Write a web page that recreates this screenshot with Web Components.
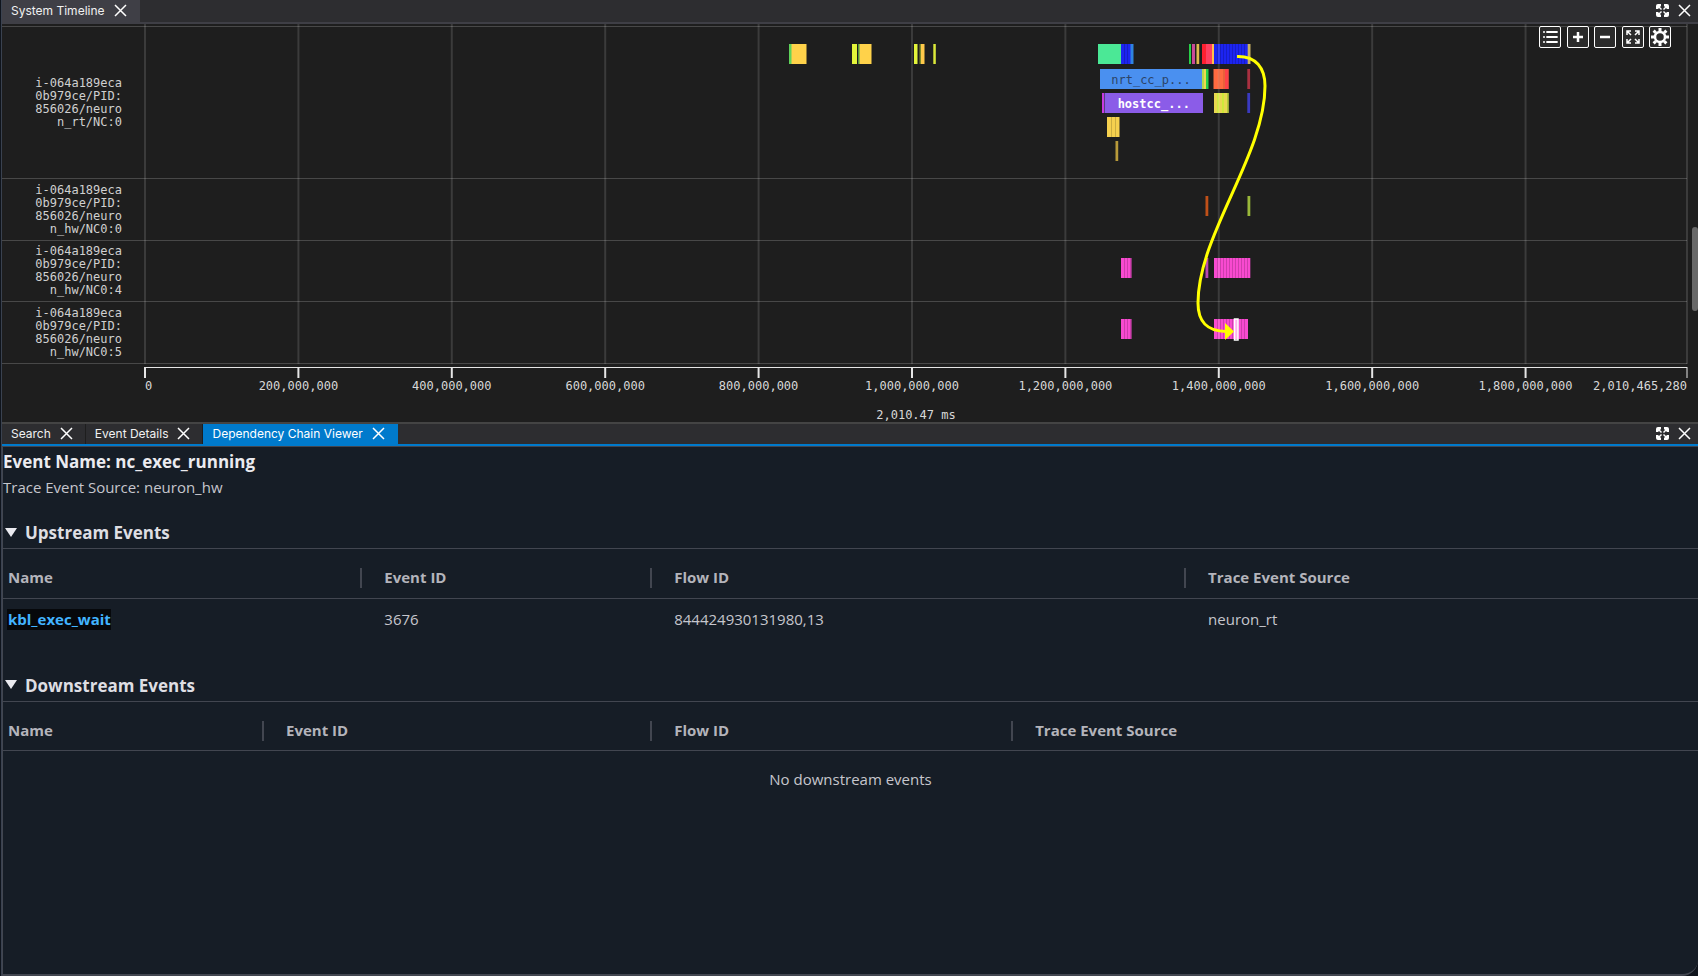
<!DOCTYPE html>
<html lang="en">
<head>
<meta charset="utf-8">
<title>System Timeline</title>
<style>
  html, body {
    height: 100%;
    margin: 0;
    background: #0f141c;
  }
</style>
</head>
<body>
<trace-app></trace-app>

<script>
// ---------- shared icons ----------
const ICON_CLOSE = `<svg width="13" height="14" viewBox="0 0 13 14"><path d="M1 1l11 11M12 1L1 12" stroke="#fff" stroke-width="1.5" fill="none"/></svg>`;
const ICON_MAX = `<svg width="13" height="14" viewBox="0 0 13 14"><path fill="#fff" d="M0 5V2Q0 0 2 0h3v2L4 3l2 2-1 1-2-2-1 1zM8 0h3q2 0 2 2v3h-2l-1-1-2 2-1-1 2-2-1-1zM0 8h2l1 1 2-2 1 1-2 2 1 1v2H2q-2 0-2-2zM13 8v3q0 2-2 2H8v-2l1-1-2-2 1-1 2 2 1-1z"/></svg>`;

// ---------- dock-tab ----------
const template_dockTab = document.createElement("template");
template_dockTab.innerHTML = `
<style>
  :host {
    display: flex;
    align-items: center;
    gap: 9px;
    padding: 0 12px 0 9px;
    background: #2d2d30;
    border-right: 1px solid #1e1e1e;
    color: #f1f1f1;
  }
  :host([open]) { background: #3f3f46; border-color: #3f3f46; }
  :host([active]) { background: #007acc; border-color: #007acc; color: #fff; }
  button { all: unset; display: block; cursor: pointer; }
  svg { display: block; }
  .name { cursor: default; white-space: nowrap; }
</style>
<button class="name" role="tab"><slot></slot></button>
<button aria-label="Close tab">${ICON_CLOSE}</button>
`;

class DockTab extends HTMLElement {
  constructor() {
    super();
    this.attachShadow({ mode: "open" });
    this.shadowRoot.appendChild(template_dockTab.content.cloneNode(true));
  }
}
customElements.define("dock-tab", DockTab);

// ---------- dock-bar: the strip that holds the tabs ----------
const template_dockBar = document.createElement("template");
template_dockBar.innerHTML = `
<style>
  :host {
    display: flex;
    justify-content: space-between;
    box-sizing: border-box;
    height: 24px;
    background: #2d2d30;
    border-bottom: 2px solid #3f3f46;
    font: 12px/20px Inter, "Liberation Sans", sans-serif;
  }
  :host([focused]) { border-top: 2px solid #444; border-bottom-color: #007acc; }
  .tabs { display: flex; }
  .tools { display: flex; align-items: center; gap: 9px; padding-right: 7px; }
  button { all: unset; display: block; cursor: pointer; }
  svg { display: block; }
</style>
<div class="tabs" role="tablist"><slot></slot></div>
<div class="tools">
  <button aria-label="Maximize">${ICON_MAX}</button>
  <button aria-label="Close">${ICON_CLOSE}</button>
</div>
`;

class DockBar extends HTMLElement {
  constructor() {
    super();
    this.attachShadow({ mode: "open" });
    this.shadowRoot.appendChild(template_dockBar.content.cloneNode(true));
  }
}
customElements.define("dock-bar", DockBar);

// ---------- timeline-track ----------
const PLOT_UNITS = 1542; // horizontal resolution of the bar data
const TOTAL = 2010465280;
const TICK = 200000000;
const pct = (v) => ((v / PLOT_UNITS) * 100).toFixed(4) + "%";

// each bar: [lane, start, width, colour, options]
const TRACKS = [
  {
    name: "i-064a189eca0b979ce/PID:856026/neuron_rt/NC:0",
    height: 152,
    bars: [
      [0, 644, 3, "#5fd35a"], [0, 646.5, 15, "#ffd24a"],
      [0, 707, 5, "#e4f53a"], [0, 713, 2, "#4f9a3c"], [0, 714.5, 12, "#ffd24a"],
      [0, 769, 3.5, "#e4f53a"], [0, 774.5, 2, "#7d8a2c"], [0, 776, 3.5, "#ffc94a"], [0, 788.3, 2.5, "#dbe83a"],
      [0, 953, 23, "#4be896"], [0, 976, 10, "#1c24f0", { step: 3 }], [0, 985.5, 3, "#2f84e0"],
      [0, 1044, 2, "#28d048"], [0, 1047, 3, "#c84a98"], [0, 1051.5, 2.7, "#e0b84c"],
      [0, 1057, 4, "#ff2030"], [0, 1061, 6.5, "#ff4060"], [0, 1067, 2, "#ffc04a"],
      [0, 1069, 34, "#1c24f0", { step: 3 }], [0, 1102.7, 2.8, "#c8b060"],
      [1, 955, 102, "#4a90f0", { text: "nrt_cc_p...", fill: "#2c4468" }],
      [1, 1057, 2, "#b4d850"], [1, 1059, 2, "#f0d850"], [1, 1061, 2.5, "#28d048"],
      [1, 1068.5, 15, "#ff6a40", { step: 5 }], [1, 1080, 3.5, "#ff4048"], [1, 1102.3, 2.8, "#a83040"],
      [2, 957, 2, "#c83ae0"], [2, 959.5, 98.5, "#8b5ce8", { text: "hostcc_...", fill: "#fff", bold: true }],
      [2, 1069, 14.5, "#e8d850"], [2, 1072, 2, "#cfe83a"], [2, 1077, 2, "#cfe83a"], [2, 1082, 1.5, "#b0c838"],
      [2, 1102.3, 2.8, "#3a3ac0"],
      [3, 962, 12.5, "#f5d04e", { step: 4 }],
      [4, 970.5, 2.7, "#b89a3a"]
    ]
  },
  {
    name: "i-064a189eca0b979ce/PID:856026/neuron_hw/NC0:0",
    height: 62,
    bars: [[0, 1060.5, 2.8, "#c05018"], [0, 1102.5, 2.8, "#9ab83a"]]
  },
  {
    name: "i-064a189eca0b979ce/PID:856026/neuron_hw/NC0:4",
    height: 61,
    bars: [
      [0, 976, 10.5, "#f84ad0", { step: 3 }],
      [0, 1060.5, 2.8, "#b848b0"],
      [0, 1069, 36.3, "#f84ad0", { step: 3 }]
    ]
  },
  {
    name: "i-064a189eca0b979ce/PID:856026/neuron_hw/NC0:5",
    height: 62,
    bars: [
      [0, 976, 10.5, "#f84ad0", { step: 3 }],
      [0, 1069, 34, "#f84ad0", { step: 3 }],
      [0, 1089.5, 3.5, "#ffb0ec", { selected: true }]
    ]
  }
];
const LANE_TOP = 17;
const LANE_STEP = 24;
const BAR_HEIGHT = 20;

class TimelineTrack extends HTMLElement {
  constructor() {
    super();
    this.attachShadow({ mode: "open" });
  }

  set track(t) {
    this.shadowRoot.innerHTML = `
<style>
  :host {
    display: grid;
    grid-template-columns: 143px 1fr;
    align-items: center;
    box-sizing: border-box;
    border-bottom: 1px solid #484848;
  }
  .name {
    width: 88px;
    margin-left: 32px;
    text-align: right;
    word-break: break-all;
    line-height: 13px;
    color: #d0d0d0;
  }
  svg { display: block; width: 100%; height: 100%; }
</style>
<div class="name">${t.name}</div>
<svg>${t.bars.map((b) => this.drawBar(b)).join("")}</svg>`;
    this.style.height = t.height + "px";
  }

  drawBar([lane, start, width, color, opt = {}]) {
    const y = LANE_TOP + lane * LANE_STEP + (lane ? 1 : 0);
    let out = `<rect x="${pct(start)}" y="${y}" width="${pct(width)}" height="${BAR_HEIGHT}" fill="${color}"/>`;
    // neighbouring events inside one block
    if (opt.step) {
      for (let x = start + opt.step; x < start + width - 1; x += opt.step) {
        out += `<rect x="${pct(x)}" y="${y}" width="1" height="${BAR_HEIGHT}" fill="#000" opacity=".17"/>`;
      }
    }
    if (opt.selected) {
      out += `<rect x="${pct(start)}" y="${y}" width="${pct(width)}" height="21" fill="none" stroke="#fff" stroke-width="1.5"/>`;
    }
    if (opt.text) {
      out += `<text x="${pct(start + width / 2)}" y="${y + 15}" text-anchor="middle" fill="${opt.fill}" font-weight="${opt.bold ? 700 : 400}">${opt.text}</text>`;
    }
    return out;
  }
}
customElements.define("timeline-track", TimelineTrack);

// ---------- time-axis ----------
class TimeAxis extends HTMLElement {
  constructor() {
    super();
    this.attachShadow({ mode: "open" });
  }

  connectedCallback() {
    let ticks = "";
    // the last step is left out when it would run into the end label
    for (let v = 0; v < TOTAL - TICK / 2; v += TICK) {
      const x = ((v / TOTAL) * 100).toFixed(4) + "%";
      const anchor = v ? "middle" : "start";
      ticks += `<line x1="${x}" x2="${x}" y1="0" y2="11"/><text x="${x}" y="23" text-anchor="${anchor}">${v.toLocaleString("en-US")}</text>`;
    }
    this.shadowRoot.innerHTML = `
<style>
  :host { display: block; margin-left: 143px; padding-top: 3px; }
  svg { display: block; width: 100%; height: 40px; overflow: visible; }
  line { stroke: #e6e6e6; stroke-width: 2; }
  text, .total { fill: #d8d8d8; color: #d8d8d8; }
  .total { text-align: center; line-height: 16px; }
</style>
<svg>
  <line x1="0" x2="100%" y1=".5" y2=".5" style="stroke-width:1"/>
  ${ticks}
  <line x1="100%" x2="100%" y1="0" y2="11" style="stroke-width:1"/>
  <text x="100%" y="23" text-anchor="end">${TOTAL.toLocaleString("en-US")}</text>
</svg>
<div class="total">2,010.47 ms</div>`;
  }
}
customElements.define("time-axis", TimeAxis);

// ---------- timeline-view ----------
const template_timelineView = document.createElement("template");
template_timelineView.innerHTML = `
<style>
  :host {
    display: block;
    position: relative;
    box-sizing: border-box;
    height: 398px;
    padding: 2px 11px 0 0;
    overflow: hidden;
    background: #1e1e1e;
    font: 12px "DejaVu Sans Mono", "Liberation Mono", monospace;
  }
  .tracks { border-top: 1px solid #484848; }
  /* grid and arrow lie over the tracks */
  .grid, .flow {
    position: absolute;
    top: 0;
    left: 143px;
    width: calc(100% - 154px);
    height: 340px;
    overflow: visible;
    pointer-events: none;
  }
  .grid line { stroke: #fff; stroke-opacity: .13; stroke-width: 2; }
  .tools {
    position: absolute;
    top: 2px;
    right: 27px;
    width: 132px;
    display: flex;
    justify-content: space-between;
  }
  .tools button {
    box-sizing: border-box;
    width: 22px;
    height: 22px;
    padding: 0;
    border: 1px solid #fff;
    border-radius: 2px;
    background: #2b2b2b;
  }
  .tools svg { display: block; width: 20px; height: 20px; }
  .thumb {
    position: absolute;
    top: 203px;
    right: 0;
    width: 6px;
    height: 84px;
    border-radius: 3px;
    background: #686868;
  }
</style>
<svg class="grid"></svg>
<div class="tracks"></div>
<time-axis></time-axis>
<svg class="flow" viewBox="0 0 1542 340" preserveAspectRatio="none">
  <path d="M1092 32.500C1111 32 1120 44 1120 62C1120 131 1053 211 1053 279C1053 298 1062 307 1081 307.500" fill="none" stroke="#ff0" stroke-width="3"/>
  <path d="M1080 299v17l9-8.500z" fill="#ff0"/>
</svg>
<div class="tools">
  <button aria-label="Legend"><svg viewBox="0 0 20 20"><path d="M7 5h10M7 10h10M7 15h10" stroke="#fff" stroke-width="1.800" stroke-linecap="round"/><path d="M3 5h2M3 10h2M3 15h2" stroke="#fff" stroke-width="1.500"/></svg></button>
  <button aria-label="Zoom in"><svg viewBox="0 0 20 20"><path d="M5 10h10M10 5v10" stroke="#fff" stroke-width="2.500"/></svg></button>
  <button aria-label="Zoom out"><svg viewBox="0 0 20 20"><path d="M5 10h10" stroke="#fff" stroke-width="2.500"/></svg></button>
  <button aria-label="Fit"><svg viewBox="0 0 20 20"><path d="M4 8V4h4M12 4h4v4M4 12v4h4M16 12v4h-4M4 4l4 4M16 4l-4 4M4 16l4-4M16 16l-4-4" fill="none" stroke="#fff" stroke-width="1.500"/></svg></button>
  <button aria-label="Settings"><svg viewBox="0 0 20 20"><circle cx="10" cy="10" r="5" fill="none" stroke="#fff" stroke-width="2.500"/><path d="M10 1v3M10 16v3M1 10h3M16 10h3M3.600 3.600l2.200 2.200M14.200 14.200l2.200 2.200M16.400 3.600l-2.200 2.200M5.800 14.200l-2.200 2.200" stroke="#fff" stroke-width="3"/></svg></button>
</div>
<div class="thumb"></div>
`;

class TimelineView extends HTMLElement {
  constructor() {
    super();
    this.attachShadow({ mode: "open" });
    this.shadowRoot.appendChild(template_timelineView.content.cloneNode(true));
  }

  connectedCallback() {
    const tracks = this.shadowRoot.querySelector(".tracks");
    for (const t of TRACKS) {
      const el = document.createElement("timeline-track");
      el.track = t;
      tracks.appendChild(el);
    }
    let lines = "";
    for (let v = 0; v < TOTAL - TICK / 2; v += TICK) {
      const x = ((v / TOTAL) * 100).toFixed(4) + "%";
      lines += `<line x1="${x}" x2="${x}" y1="0" y2="340"/>`;
    }
    lines += `<line x1="100%" x2="100%" y1="0" y2="340"/>`;
    this.shadowRoot.querySelector(".grid").innerHTML = lines;
  }
}
customElements.define("timeline-view", TimelineView);

// ---------- event-section: collapsible title with a table in it ----------
class EventSection extends HTMLElement {
  constructor() {
    super();
    this.attachShadow({ mode: "open" });
  }

  connectedCallback() {
    const widths = this.getAttribute("widths").split(",");
    const heads = ["Name", "Event ID", "Flow ID", "Trace Event Source"];
    const row = this.getAttribute("row");
    const cells = row
      ? row.split("|").map((c, i) => `<td>${i ? c : `<a href="#${c}">${c}</a>`}</td>`).join("")
      : `<td class="empty" colspan="4">No downstream events</td>`;
    this.shadowRoot.innerHTML = `
<style>
  :host { display: block; }
  summary {
    display: flex;
    align-items: center;
    gap: 8px;
    height: 30px;
    padding-left: 2px;
    border-bottom: 1px solid #424650;
    list-style: none;
    color: #dedee3;
    font-size: 17px;
    font-weight: 700;
  }
  h2 { margin: 0; font-size: inherit; }
  summary svg { display: block; margin-bottom: 2px; }
  table {
    width: 100%;
    table-layout: fixed;
    border-collapse: collapse;
    text-align: left;
  }
  th {
    position: relative;
    box-sizing: border-box;
    height: 49px;
    padding: 8px 22px 0;
    border-bottom: 1px solid #424650;
    color: #b4b4bb;
    font-weight: 700;
  }
  th:not(:last-child)::after {
    content: "";
    position: absolute;
    top: 19px;
    right: 0;
    width: 2px;
    height: 20px;
    background: #424650;
  }
  td { padding: 9px 22px 11px; color: #c6c6cd; }
  th:first-child, td:first-child { padding-left: 5px; }
  td.empty { padding: 17px 0; text-align: center; }
  a {
    margin-left: -1px;
    padding: 0 0 1px 1px;
    background: #06080b;
    color: #42b4ff;
    font-weight: 700;
    text-decoration: none;
  }
</style>
<details open>
  <summary><svg width="12" height="9" viewBox="0 0 12 9"><path d="M0 0h12L6 9z" fill="#ebebf0"/></svg><h2><slot></slot></h2></summary>
  <table>
    <colgroup>${widths.map((w) => `<col style="width:${w}%">`).join("")}<col></colgroup>
    <thead><tr>${heads.map((h) => `<th>${h}</th>`).join("")}</tr></thead>
    <tbody><tr>${cells}</tr></tbody>
  </table>
</details>`;
  }
}
customElements.define("event-section", EventSection);

// ---------- dependency-viewer ----------
const template_dependencyViewer = document.createElement("template");
template_dependencyViewer.innerHTML = `
<style>
  :host {
    display: block;
    box-sizing: border-box;
    border: 1px solid #424650;
    border-width: 1px 0 2px 1px;
    border-bottom-right-radius: 16px;
    background: #161d26;
    color: #c6c6cd;
    font: 15px/22px "Open Sans", "Noto Sans", sans-serif;
  }
  h1 {
    margin: 0;
    padding-top: 1px;
    color: #ebebf0;
    font-size: 17px;
    line-height: 28px;
  }
  p { margin: 0; }
  event-section { margin-top: 20px; }
  event-section + event-section { margin-top: 30px; }
</style>
<h1>Event Name: nc_exec_running</h1>
<p>Trace Event Source: neuron_hw</p>
<event-section widths="21.2,17.1,31.5" row="kbl_exec_wait|3676|844424930131980,13|neuron_rt">Upstream Events</event-section>
<event-section widths="15.4,22.9,21.3">Downstream Events</event-section>
`;

class DependencyViewer extends HTMLElement {
  constructor() {
    super();
    this.attachShadow({ mode: "open" });
    this.shadowRoot.appendChild(template_dependencyViewer.content.cloneNode(true));
  }
}
customElements.define("dependency-viewer", DependencyViewer);

// ---------- trace-app ----------
const template_traceApp = document.createElement("template");
template_traceApp.innerHTML = `
<style>
  :host {
    display: flex;
    flex-direction: column;
    box-sizing: border-box;
    min-height: 100%;
    margin-left: 1px;
    border-left: 1px solid #3a4250;
  }
  dependency-viewer { flex: 1; }
</style>
<dock-bar><dock-tab open>System Timeline</dock-tab></dock-bar>
<timeline-view></timeline-view>
<dock-bar focused>
  <dock-tab>Search</dock-tab>
  <dock-tab>Event Details</dock-tab>
  <dock-tab active>Dependency Chain Viewer</dock-tab>
</dock-bar>
<dependency-viewer></dependency-viewer>
`;

class TraceApp extends HTMLElement {
  constructor() {
    super();
    this.attachShadow({ mode: "open" });
    this.shadowRoot.appendChild(template_traceApp.content.cloneNode(true));
  }
}
customElements.define("trace-app", TraceApp);
</script>
</body>
</html>
